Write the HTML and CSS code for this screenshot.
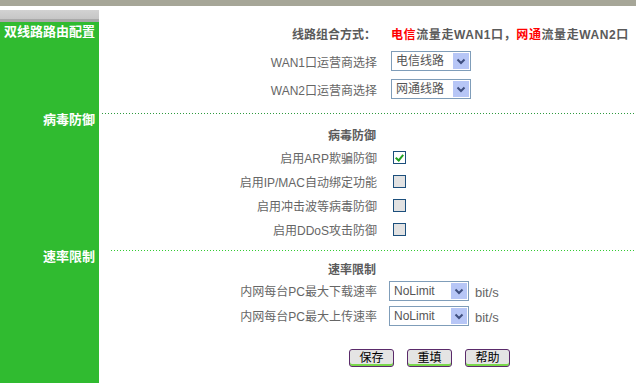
FILE: index.html
```html
<!DOCTYPE html>
<html lang="zh-CN">

<head>
    <meta charset="UTF-8">
    <title>双线路路由配置</title>
    <link rel="stylesheet" href="styles.css">
</head>

<body>
    <div class="topbar"></div>
    <div class="page">
        <div class="side band"></div>
        <div class="blank"></div>

        <!-- 双线路 -->
        <div class="side"><h2>双线路路由配置</h2></div>
        <div class="main sec1">
            <div class="row title">
                <span class="lbl">线路组合方式：</span>
                <span class="value"><em>电信</em>流量走WAN1口，<em>网通</em>流量走WAN2口</span>
            </div>
            <div class="row">
                <span class="lbl">WAN1口运营商选择</span>
                <span class="sel">
                    <select><option>电信线路</option><option>网通线路</option></select>
                    <svg class="arrow" width="16" height="16" viewBox="0 0 16 16"><rect width="16" height="16" fill="#b7c6f6"/><path d="M4.5 6.5l3.5 3.5 3.5-3.5" fill="none" stroke="#3f4f7f" stroke-width="2"/></svg>
                </span>
            </div>
            <div class="row">
                <span class="lbl">WAN2口运营商选择</span>
                <span class="sel">
                    <select><option>网通线路</option><option>电信线路</option></select>
                    <svg class="arrow" width="16" height="16" viewBox="0 0 16 16"><rect width="16" height="16" fill="#b7c6f6"/><path d="M4.5 6.5l3.5 3.5 3.5-3.5" fill="none" stroke="#3f4f7f" stroke-width="2"/></svg>
                </span>
            </div>
        </div>

        <!-- 病毒防御 -->
        <div class="side"><h2>病毒防御</h2></div>
        <div class="main sec2">
            <div class="line"></div>
            <div class="row title"><span class="lbl">病毒防御</span></div>
            <div class="row check"><span class="lbl">启用ARP欺骗防御</span><input type="checkbox" checked></div>
            <div class="row check"><span class="lbl">启用IP/MAC自动绑定功能</span><input type="checkbox"></div>
            <div class="row check"><span class="lbl">启用冲击波等病毒防御</span><input type="checkbox"></div>
            <div class="row check"><span class="lbl">启用DDoS攻击防御</span><input type="checkbox"></div>
        </div>

        <!-- 速率限制 -->
        <div class="side"><h2>速率限制</h2></div>
        <div class="main sec3">
            <div class="line short"></div>
            <div class="row title"><span class="lbl">速率限制</span></div>
            <div class="row rate">
                <span class="lbl">内网每台PC最大下载速率</span>
                <span class="sel">
                    <select><option>NoLimit</option></select>
                    <svg class="arrow" width="16" height="16" viewBox="0 0 16 16"><rect width="16" height="16" fill="#b7c6f6"/><path d="M4.5 6.5l3.5 3.5 3.5-3.5" fill="none" stroke="#3f4f7f" stroke-width="2"/></svg>
                </span>
                <span class="unit">bit/s</span>
            </div>
            <div class="row rate">
                <span class="lbl">内网每台PC最大上传速率</span>
                <span class="sel">
                    <select><option>NoLimit</option></select>
                    <svg class="arrow" width="16" height="16" viewBox="0 0 16 16"><rect width="16" height="16" fill="#b7c6f6"/><path d="M4.5 6.5l3.5 3.5 3.5-3.5" fill="none" stroke="#3f4f7f" stroke-width="2"/></svg>
                </span>
                <span class="unit">bit/s</span>
            </div>
            <div class="buttons">
                <button>保存</button>
                <button>重填</button>
                <button>帮助</button>
            </div>
        </div>
    </div>
</body>

</html>
```

FILE: styles.css
```css
body {
    margin: 0;
    font-family: "Liberation Sans", "Noto Sans CJK SC", sans-serif;
    font-size: 12px;
    color: #666666;
    background: #ffffff;
}

.topbar {
    height: 6px;
    background: #a6a698;
}

.page {
    margin-top: 4px;
    display: grid;
    grid-template-columns: 99px 1fr;
    grid-template-rows: 12px auto auto 1fr;
    min-height: calc(100vh - 10px);
}

.side {
    background: #30bb30;
}

.side.band {
    background: linear-gradient(#d2d2d2 0, #c6c6c6 9px, #a9a9a9 9px);
}

.side h2 {
    margin: 0;
    padding-right: 4px;
    font-size: 13px;
    line-height: 14px;
    font-weight: bold;
    color: #ffffff;
    text-align: right;
}

.side:nth-child(3) h2 {
    padding-top: 3px;
}

.line {
    height: 1px;
    margin-left: 3px;
    background: repeating-linear-gradient(to right, #2e9a3e 0 1px, transparent 1px 3px);
}

.line.short {
    margin-left: 12px;
    background: repeating-linear-gradient(to right, #33cc33 0 1px, transparent 1px 3px);
}

.row {
    display: flex;
    align-items: center;
    height: 28px;
}

.lbl {
    width: 292px;
    padding-right: 14px;
    box-sizing: border-box;
    text-align: right;
    white-space: nowrap;
}

.title {
    height: 22px;
    font-weight: bold;
    color: #5a5a5a;
}

.title .lbl {
    padding-right: 15px;
}

.value {
    white-space: nowrap;
    letter-spacing: 0.6px;
}

.value em {
    font-style: normal;
    color: #ff0000;
}

.sec1 {
    padding-bottom: 10px;
}

.sec1 .title {
    margin-bottom: 3px;
}

.sec2 {
    padding-bottom: 9px;
}

.sec2 .title {
    margin-top: 9px;
}

.sec3 .title {
    margin-top: 7px;
    height: 20px;
}

.sel {
    position: relative;
    display: inline-block;
    height: 20px;
}

.sel select {
    appearance: none;
    width: 80px;
    height: 20px;
    margin: 0;
    padding: 0 0 0 4px;
    border: 1px solid #7f9db9;
    border-radius: 0;
    background: #ffffff;
    font-family: "Liberation Sans", "Noto Sans CJK SC", sans-serif;
    font-size: 12px;
    color: #555555;
}

.sel .arrow {
    position: absolute;
    top: 2px;
    right: 2px;
    pointer-events: none;
}

.check {
    height: 24px;
}

.check input {
    appearance: none;
    position: relative;
    width: 13px;
    height: 13px;
    margin: 0 0 0 2px;
    border: 1px solid #1c4f7c;
    background: #e2e2e2;
}

.check input:checked {
    background: #ffffff;
}

.check input:checked::after {
    content: '';
    position: absolute;
    left: 3px;
    top: 1px;
    width: 3px;
    height: 6px;
    border: solid #21a121;
    border-width: 0 2px 2px 0;
    transform: rotate(40deg);
}

.rate {
    height: 25px;
}

.rate .sel {
    margin-left: -2px;
}

.unit {
    margin: 3px 0 0 6px;
    font-size: 13px;
}

.buttons {
    display: flex;
    gap: 13px;
    padding-left: 250px;
    margin-top: 21px;
}

.buttons button {
    width: 45px;
    height: 18px;
    padding: 0;
    border: 1px solid #5a2a6a;
    border-radius: 3px;
    background: #e4e4e4;
    box-shadow: inset 0 -2px 0 #7ad84a;
    font-family: "Liberation Sans", "Noto Sans CJK SC", sans-serif;
    font-size: 12px;
    line-height: 15px;
    color: #000000;
}
```
